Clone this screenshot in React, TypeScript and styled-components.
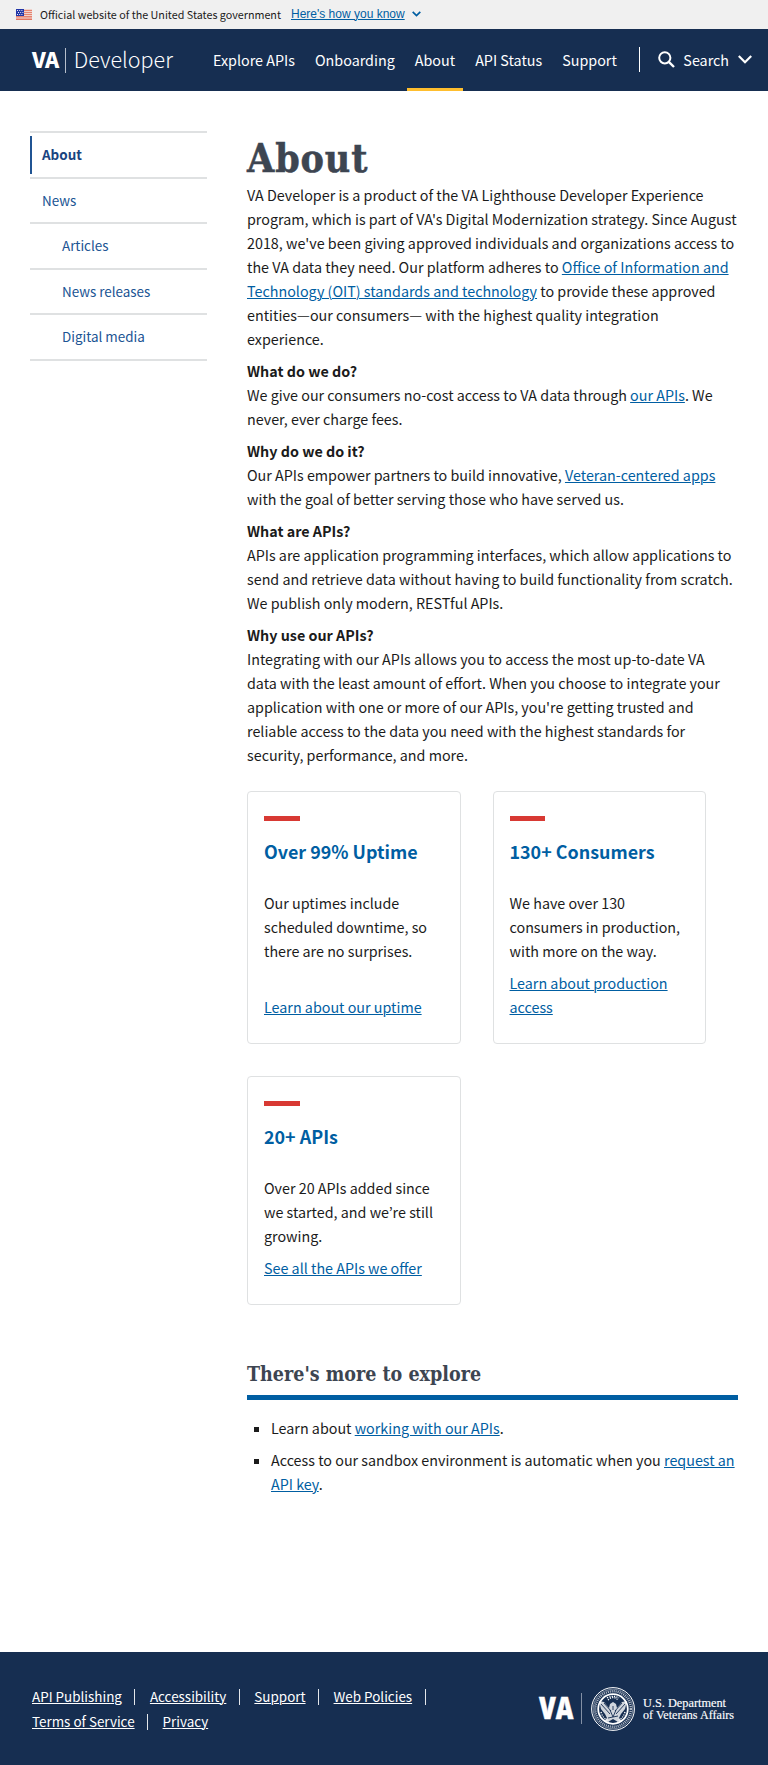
import React from "react";
import styled, { createGlobalStyle } from "styled-components";

const sans = '"Noto Sans CJK KR", "Noto Sans CJK JP", "Open Sans", sans-serif';
const slab = '"DejaVu Serif Condensed", "DejaVu Serif", serif';
const navy = "#162e51";
const blue = "#005ea2";
const rule = "#dfe1e2";

const GlobalStyle = createGlobalStyle`
  *, *::before, *::after { box-sizing: border-box; }
  body {
    margin: 0;
    background: #fff;
    color: #1b1b1b;
    font: 14.325px/24px ${sans};
  }
  a { color: ${blue}; text-decoration-thickness: 1px; text-underline-offset: 1px; }
`;

const Page = styled.div`
  display: flex;
  flex-direction: column;
  min-height: 1765px;
`;

const Banner = styled.div`
  display: flex;
  align-items: center;
  height: 29px;
  padding-left: 16px;
  background: #f0f0f0;
  font-size: 10.75px;
  line-height: 29px;
`;

const BannerText = styled.span`
  margin: 0 10px 0 8px;
  white-space: nowrap;
`;

const BannerButton = styled.a`
  display: flex;
  align-items: center;
  gap: 7px;
  margin-bottom: 1px;
  font-family: "Liberation Sans", Arial, sans-serif;
  font-size: 12px;
  text-decoration: none;
  white-space: nowrap;
  span { text-decoration: underline; text-decoration-thickness: 1px; text-underline-offset: 1px; }
`;

const Header = styled.header`
  display: flex;
  align-items: stretch;
  height: 62px;
  padding-left: 32px;
  background: ${navy};
  color: #fff;
`;

const Brand = styled.a`
  display: flex;
  align-items: center;
  width: 173px;
  padding-bottom: 2px;
  color: #fff;
  font-size: 21.5px;
  text-decoration: none;
`;

const BrandBold = styled.span`
  font-weight: 900;
  letter-spacing: -0.4px;
`;

const BrandBar = styled.span`
  width: 1px;
  height: 25px;
  margin: 2px 8px 0 6px;
  background: #b6becb;
`;

const BrandLight = styled.span`
  font-weight: 300;
`;

const Nav = styled.nav`
  display: flex;
  gap: 4px;
`;

const NavLink = styled.a<{ $active?: boolean }>`
  display: flex;
  align-items: center;
  padding: 3px 8px 0;
  border-bottom: 3px solid ${(p) => (p.$active ? "#ffbe2e" : "transparent")};
  color: #fff;
  font-size: 14.33px;
  text-decoration: none;
  white-space: nowrap;
`;

const Search = styled.button`
  display: flex;
  align-items: center;
  align-self: center;
  height: 25px;
  margin: 0 0 1px 14.5px;
  padding: 0 0 0 18px;
  border: 0;
  border-left: 1px solid #fff;
  background: none;
  color: #fff;
  font: 14.33px/24px ${sans};
  span { margin: 1px 9px 0 8px; }
`;

const Body = styled.div`
  display: flex;
  flex: 1;
  padding: 40px 30px 0;
`;

const SideNav = styled.ul`
  flex: none;
  width: 177px;
  margin: 0 40px 0 0;
  padding: 0;
  list-style: none;
  align-self: flex-start;
  border-bottom: 2px solid ${rule};
`;

const SideItem = styled.li`
  height: 45.6px;
  padding-top: 3px;
  border-top: 2px solid ${rule};
`;

const SideLink = styled.a<{ $active?: boolean; $nested?: boolean }>`
  display: block;
  height: 38px;
  padding-left: ${(p) => (p.$nested ? 32 : p.$active ? 10 : 12)}px;
  border-left: ${(p) => (p.$active ? "2px solid #205493" : "0")};
  color: ${(p) => (p.$active ? "#1a4480" : "#205493")};
  font-size: 13.43px;
  font-weight: ${(p) => (p.$active ? 700 : 400)};
  line-height: 36px;
  text-decoration: none;
`;

const Main = styled.main`
  flex: none;
  width: 491px;
`;

const Title = styled.h1`
  margin: 0;
  padding-top: 1px;
  height: 52px;
  color: #3d4551;
  font: 700 39px/52px ${slab};
  letter-spacing: 0.9px;
  -webkit-text-stroke: 0.5px #3d4551;
`;

const Subhead = styled.h2`
  margin: 8px 0 0;
  font-size: 14.325px;
  font-weight: 700;
  line-height: 24px;
`;

const Para = styled.p`
  margin: 0;
  white-space: nowrap;
`;

const Cards = styled.div`
  display: grid;
  grid-template-columns: 213.5px 213px;
  gap: 32px;
  margin-top: 24px;
`;

const Card = styled.section`
  display: flex;
  flex-direction: column;
  padding: 24px 16px;
  border: 1px solid ${rule};
  border-radius: 4px;
  white-space: nowrap;
  &::before {
    content: "";
    width: 20%;
    height: 5px;
    background: #d83933;
  }
`;

const CardTitle = styled.h3`
  margin: 14px 0 24px;
  color: ${blue};
  font-size: 17.9px;
  font-weight: 700;
  line-height: 32px;
`;

const CardLink = styled.a`
  margin-top: auto;
  padding-top: 8px;
`;

const ExploreTitle = styled.h2`
  margin: 55px 0 0;
  padding-bottom: 6px;
  border-bottom: 5px solid ${blue};
  color: #3d4551;
  font: 700 19.5px/29px ${slab};
  letter-spacing: 0;
`;

const List = styled.ul`
  margin: 16px 0 0;
  padding: 0 0 0 24px;
  list-style: none;
`;

const Item = styled.li`
  margin-bottom: 8px;
  white-space: nowrap;
  &::before {
    content: "";
    float: left;
    width: 5px;
    height: 5px;
    margin: 11px 0 0 -17px;
    background: #1b1b1b;
  }
`;

const Footer = styled.footer`
  display: flex;
  justify-content: space-between;
  height: 113px;
  padding: 32px 32px 0;
  background: ${navy};
`;

const FooterLinks = styled.div`
  display: flex;
  flex-wrap: wrap;
  align-content: flex-start;
  width: 410px;
`;

const FooterLink = styled.span<{ $last?: boolean }>`
  display: flex;
  align-items: center;
  height: 25px;
  font-size: 13.43px;
  white-space: nowrap;
  a { color: #fff; margin-bottom: 1px; }
  &::after {
    content: "";
    display: ${(p) => (p.$last ? "none" : "block")};
    width: 1px;
    height: 16px;
    margin: 1px 14.5px 0 12.5px;
    background: #e3e6ea;
  }
`;

const Flag = () => (
  <svg width="16" height="11" viewBox="0 0 16 11">
    <path fill="#f6efed" d="M0 0h16v11H0z" />
    <path stroke="#db3e1f" strokeWidth=".9" strokeOpacity=".85" d="M0 1.3h16M0 3.3h16M0 5.3h16M0 7.3h16M0 9h16M0 10.6h16" />
    <path fill="#2337a8" d="M0 0h8v7H0z" />
    <path stroke="#fff" strokeWidth=".9" strokeDasharray="1 1.2" d="M1 1.5h6.5M2 3.5h5.5M1 5.5h6.5" />
  </svg>
);

const Seal = () => (
  <g stroke="#fff" fill="none">
    <circle cx="74" cy="24" r="21.4" strokeWidth="1" />
    <circle cx="74" cy="24" r="19.8" strokeWidth=".6" opacity=".7" />
    <circle cx="74" cy="24" r="17.8" strokeWidth="2.4" strokeDasharray="1.1 .9" opacity=".65" />
    <circle cx="74" cy="24" r="14.8" strokeWidth="1.8" />
    <path fill="#fff" stroke="none" opacity=".8" d="M60 16l5 1 5 6 1-4 3-2 3 2 1 4 5-6 5-1-2 8-4 5-2 4 3 3-4 1-5-3-5 3-4-1 3-3-2-4-4-5z" />
    <path stroke={navy} strokeWidth=".9" d="M62 19l9 10M86 19l-9 10M65 18l7 8M83 18l-7 8M71 25l3 7 3-7M69 33l10-2M74 21v4" />
    <path strokeWidth="1.3" strokeDasharray="1.2 1.2" d="M69 15q5-5 10 0M68 12.8q6-3 12 0M62 27q2 7 8 9M86 27q-2 7-8 9" />
  </g>
);

const DepartmentLogo = () => (
  <svg width="199" height="48" viewBox="0 0 199 48" style={{ marginTop: 1 }}>
    <text x="2" y="34" fill="#fff" stroke="#fff" strokeWidth=".5" fontFamily="Open Sans" fontWeight="800" fontSize="29.5" textLength="34.5" lengthAdjust="spacingAndGlyphs">VA</text>
    <path stroke="#8390a5" d="M44.5 8v31" />
    <g transform="translate(2 0)"><Seal /></g>
    <g fill="#fff" stroke="#fff" strokeWidth=".15" fontFamily="Liberation Serif" fontSize="12">
      <text x="106" y="22" textLength="83" lengthAdjust="spacingAndGlyphs">U.S. Department</text>
      <text x="106" y="34" textLength="91" lengthAdjust="spacingAndGlyphs">of Veterans Affairs</text>
    </g>
  </svg>
);

const sideItems = [
  { label: "About", active: true },
  { label: "News" },
  { label: "Articles", nested: true },
  { label: "News releases", nested: true },
  { label: "Digital media", nested: true },
];
const navItems = ["Explore APIs", "Onboarding", "About", "API Status", "Support"];
const footerItems = ["API Publishing", "Accessibility", "Support", "Web Policies", "Terms of Service", "Privacy"];

export default function App() {
  return (
    <Page>
      <GlobalStyle />
      <Banner>
        <Flag />
        <BannerText>Official website of the United States government</BannerText>
        <BannerButton href="#">
          <span>Here's how you know</span>
          <svg width="9" height="6" viewBox="0 0 9 6" fill="none" stroke={blue} strokeWidth="1.7">
            <path d="M.7.8l3.8 3.8L8.3.8" />
          </svg>
        </BannerButton>
      </Banner>
      <Header>
        <Brand href="#">
          <BrandBold>VA</BrandBold>
          <BrandBar />
          <BrandLight>Developer</BrandLight>
        </Brand>
        <Nav>
          {navItems.map((label) => (
            <NavLink key={label} href="#" $active={label === "About"}>{label}</NavLink>
          ))}
        </Nav>
        <Search>
          <svg width="17" height="17" viewBox="0 0 17 17" fill="none" stroke="#fff">
            <circle cx="6.8" cy="6.8" r="5.6" strokeWidth="2" />
            <path strokeWidth="2.4" d="M10.8 10.8l5.2 5.2" />
          </svg>
          <span>Search</span>
          <svg width="14" height="9" viewBox="0 0 14 9" fill="none" stroke="#fff" strokeWidth="2.2">
            <path d="M.8 1L7 7.2 13.2 1" />
          </svg>
        </Search>
      </Header>
      <Body>
        <SideNav>
          {sideItems.map((it) => (
            <SideItem key={it.label}>
              <SideLink href="#" $active={it.active} $nested={it.nested}>{it.label}</SideLink>
            </SideItem>
          ))}
        </SideNav>
        <Main>
          <Title>About</Title>
          <Para>
            VA Developer is a product of the VA Lighthouse Developer Experience<br />
            program, which is part of VA's Digital Modernization strategy. Since August<br />
            2018, we've been giving approved individuals and organizations access to<br />
            the VA data they need. Our platform adheres to <a href="#">Office of Information and<br />
            Technology (OIT) standards and technology</a> to provide these approved<br />
            entities—our consumers— with the highest quality integration<br />
            experience.
          </Para>
          <Subhead>What do we do?</Subhead>
          <Para>
            We give our consumers no-cost access to VA data through <a href="#">our APIs</a>. We<br />
            never, ever charge fees.
          </Para>
          <Subhead>Why do we do it?</Subhead>
          <Para>
            Our APIs empower partners to build innovative, <a href="#">Veteran-centered apps</a><br />
            with the goal of better serving those who have served us.
          </Para>
          <Subhead>What are APIs?</Subhead>
          <Para>
            APIs are application programming interfaces, which allow applications to<br />
            send and retrieve data without having to build functionality from scratch.<br />
            We publish only modern, RESTful APIs.
          </Para>
          <Subhead>Why use our APIs?</Subhead>
          <Para>
            Integrating with our APIs allows you to access the most up-to-date VA<br />
            data with the least amount of effort. When you choose to integrate your<br />
            application with one or more of our APIs, you're getting trusted and<br />
            reliable access to the data you need with the highest standards for<br />
            security, performance, and more.
          </Para>
          <Cards>
            <Card>
              <CardTitle>Over 99% Uptime</CardTitle>
              <Para>Our uptimes include<br />scheduled downtime, so<br />there are no surprises.</Para>
              <CardLink href="#">Learn about our uptime</CardLink>
            </Card>
            <Card>
              <CardTitle>130+ Consumers</CardTitle>
              <Para>We have over 130<br />consumers in production,<br />with more on the way.</Para>
              <CardLink href="#">Learn about production<br />access</CardLink>
            </Card>
            <Card>
              <CardTitle>20+ APIs</CardTitle>
              <Para>Over 20 APIs added since<br />we started, and we’re still<br />growing.</Para>
              <CardLink href="#">See all the APIs we offer</CardLink>
            </Card>
          </Cards>
          <ExploreTitle>There's more to explore</ExploreTitle>
          <List>
            <Item>Learn about <a href="#">working with our APIs</a>.</Item>
            <Item>
              Access to our sandbox environment is automatic when you <a href="#">request an<br />API key</a>.
            </Item>
          </List>
        </Main>
      </Body>
      <Footer>
        <FooterLinks>
          {footerItems.map((label) => (
            <FooterLink key={label} $last={label === "Privacy"}><a href="#">{label}</a></FooterLink>
          ))}
        </FooterLinks>
        <DepartmentLogo />
      </Footer>
    </Page>
  );
}
